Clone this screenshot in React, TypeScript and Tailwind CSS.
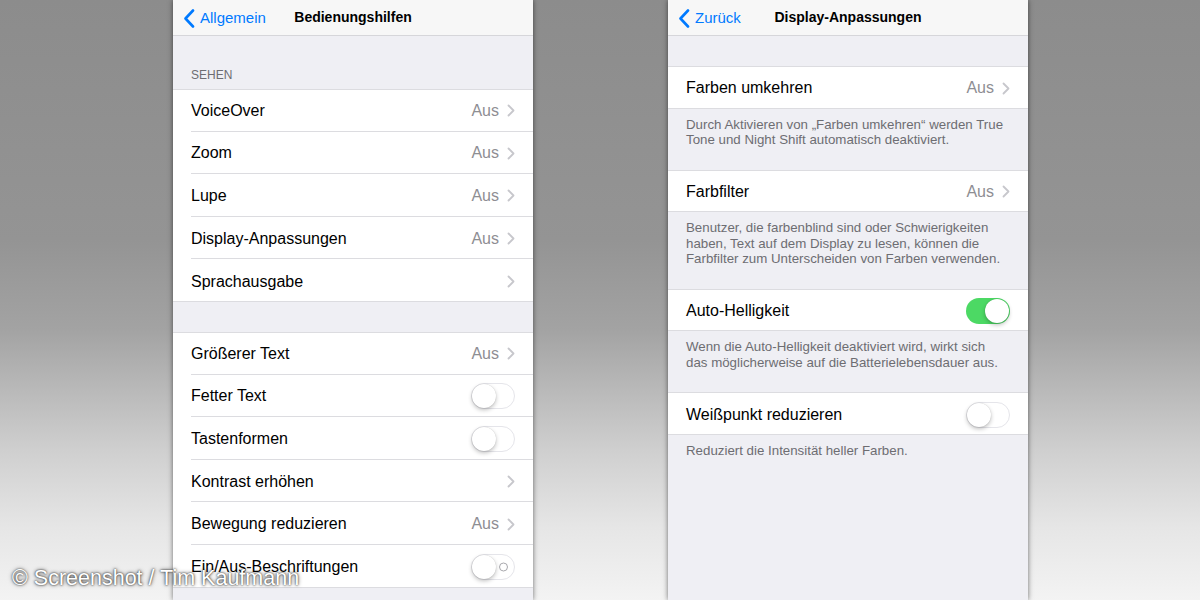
import React from "react";

const FONT = { fontFamily: '"Liberation Sans", Arial, sans-serif' };

function Chevron() {
  return (
    <svg width="8" height="13" viewBox="0 0 8 13" className="ml-[8px] shrink-0">
      <path d="M1.5 1.5 L6.5 6.5 L1.5 11.5" fill="none" stroke="#c7c7cc" strokeWidth="1.8" strokeLinecap="round" strokeLinejoin="round" />
    </svg>
  );
}

function BackChevron() {
  return (
    <svg width="12" height="19" viewBox="0 0 12 19" className="shrink-0">
      <path d="M10 1.5 L2.5 9.5 L10 17.5" fill="none" stroke="#007aff" strokeWidth="2.6" strokeLinecap="round" strokeLinejoin="round" />
    </svg>
  );
}

function Toggle({ on = false, label = false }: { on?: boolean; label?: boolean }) {
  return (
    <div
      className={
        "relative w-[44px] h-[26px] rounded-full shrink-0 " +
        (on ? "bg-[#4cd964]" : "bg-white border-[1.5px] border-[#e5e5ea]")
      }
    >
      {label && !on && (
        <div className="absolute right-[6px] top-1/2 -translate-y-1/2 w-[9px] h-[9px] rounded-full border-[1.5px] border-[#a8a8ad]" />
      )}
      <div
        className={
          "absolute top-1/2 -translate-y-1/2 w-[24px] h-[24px] rounded-full bg-white shadow-[0_2px_4px_rgba(0,0,0,0.25),0_0_1px_rgba(0,0,0,0.2)] " +
          (on ? "right-[1px]" : "left-[-0.5px]")
        }
      />
    </div>
  );
}

type RowProps = {
  title: string;
  value?: string;
  chevron?: boolean;
  toggle?: "on" | "off" | "label";
  last?: boolean;
};

function Row({ title, value, chevron, toggle, last }: RowProps) {
  return (
    <div className="h-[42.6px] pl-[18px]">
      <div
        className={
          "h-full flex items-center pr-[18px] pt-[2px] " + (last ? "" : "border-b border-[#dcdce0]")
        }
      >
        <span className="flex-1 text-[16px] text-black">{title}</span>
        {value && <span className="text-[16px] text-[#8e8e93]">{value}</span>}
        {chevron && <Chevron />}
        {toggle && <Toggle on={toggle === "on"} label={toggle === "label"} />}
      </div>
    </div>
  );
}

function Group({ rows }: { rows: RowProps[] }) {
  return (
    <div className="bg-white shadow-[inset_0_1px_0_#dcdce0,inset_0_-1px_0_#dcdce0]">
      {rows.map((r, i) => (
        <Row key={r.title} {...r} last={i === rows.length - 1} />
      ))}
    </div>
  );
}

function NavBar({ back, title }: { back: string; title: string }) {
  return (
    <div className="relative h-[36px] bg-[#f7f7f7] border-b border-[#d6d6da] flex items-center">
      <div className="absolute left-[10px] top-[7px] flex items-center gap-[5px]">
        <BackChevron />
        <span className="text-[15px] text-[#007aff]">{back}</span>
      </div>
      <div className="w-full text-center text-[14px] font-bold text-black">{title}</div>
    </div>
  );
}

function Footer({ lines }: { lines: string[] }) {
  return (
    <div className="px-[18px] pt-[8px] pb-[22px] text-[13.3px] leading-[15.5px] text-[#6d6d72]">
      {lines.map((l) => (
        <div key={l} className="whitespace-nowrap">{l}</div>
      ))}
    </div>
  );
}

function LeftScreen() {
  return (
    <div className="w-[360px] h-[600px] bg-[#efeff4] shadow-[0_0_5px_rgba(0,0,0,0.55)] overflow-hidden shrink-0">
      <NavBar back="Allgemein" title="Bedienungshilfen" />
      <div className="h-[53px] flex items-end px-[18px] pb-[5px] text-[12px] text-[#6d6d72]">
        SEHEN
      </div>
      <Group
        rows={[
          { title: "VoiceOver", value: "Aus", chevron: true },
          { title: "Zoom", value: "Aus", chevron: true },
          { title: "Lupe", value: "Aus", chevron: true },
          { title: "Display-Anpassungen", value: "Aus", chevron: true },
          { title: "Sprachausgabe", chevron: true },
        ]}
      />
      <div className="h-[30px]" />
      <Group
        rows={[
          { title: "Größerer Text", value: "Aus", chevron: true },
          { title: "Fetter Text", toggle: "off" },
          { title: "Tastenformen", toggle: "off" },
          { title: "Kontrast erhöhen", chevron: true },
          { title: "Bewegung reduzieren", value: "Aus", chevron: true },
          { title: "Ein/Aus-Beschriftungen", toggle: "label" },
        ]}
      />
    </div>
  );
}

function RightScreen() {
  return (
    <div className="w-[360px] h-[600px] bg-[#efeff4] shadow-[0_0_5px_rgba(0,0,0,0.55)] overflow-hidden shrink-0">
      <NavBar back="Zurück" title="Display-Anpassungen" />
      <div className="h-[30px]" />
      <Group rows={[{ title: "Farben umkehren", value: "Aus", chevron: true }]} />
      <Footer
        lines={[
          "Durch Aktivieren von „Farben umkehren“ werden True",
          "Tone und Night Shift automatisch deaktiviert.",
        ]}
      />
      <Group rows={[{ title: "Farbfilter", value: "Aus", chevron: true }]} />
      <Footer
        lines={[
          "Benutzer, die farbenblind sind oder Schwierigkeiten",
          "haben, Text auf dem Display zu lesen, können die",
          "Farbfilter zum Unterscheiden von Farben verwenden.",
        ]}
      />
      <Group rows={[{ title: "Auto-Helligkeit", toggle: "on" }]} />
      <Footer
        lines={[
          "Wenn die Auto-Helligkeit deaktiviert wird, wirkt sich",
          "das möglicherweise auf die Batterielebensdauer aus.",
        ]}
      />
      <Group rows={[{ title: "Weißpunkt reduzieren", toggle: "off" }]} />
      <Footer lines={["Reduziert die Intensität heller Farben."]} />
    </div>
  );
}

export default function App() {
  return (
    <div
      className="relative w-[1200px] h-[600px] overflow-hidden bg-[linear-gradient(to_bottom,#8c8c8c_0%,#949494_40%,#a3a3a3_55%,#cfcfcf_75%,#e6e6e6_88%,#f3f3f3_100%)]"
      style={FONT}
    >
      <div className="flex justify-center gap-[135px] pl-[1px]">
        <LeftScreen />
        <RightScreen />
      </div>
      <div className="absolute left-[12px] bottom-[6px] text-[21.5px] text-white [text-shadow:0_0_2px_rgba(0,0,0,0.9),0_0_4px_rgba(0,0,0,0.6)]">
        © Screenshot / Tim Kaufmann
      </div>
    </div>
  );
}
